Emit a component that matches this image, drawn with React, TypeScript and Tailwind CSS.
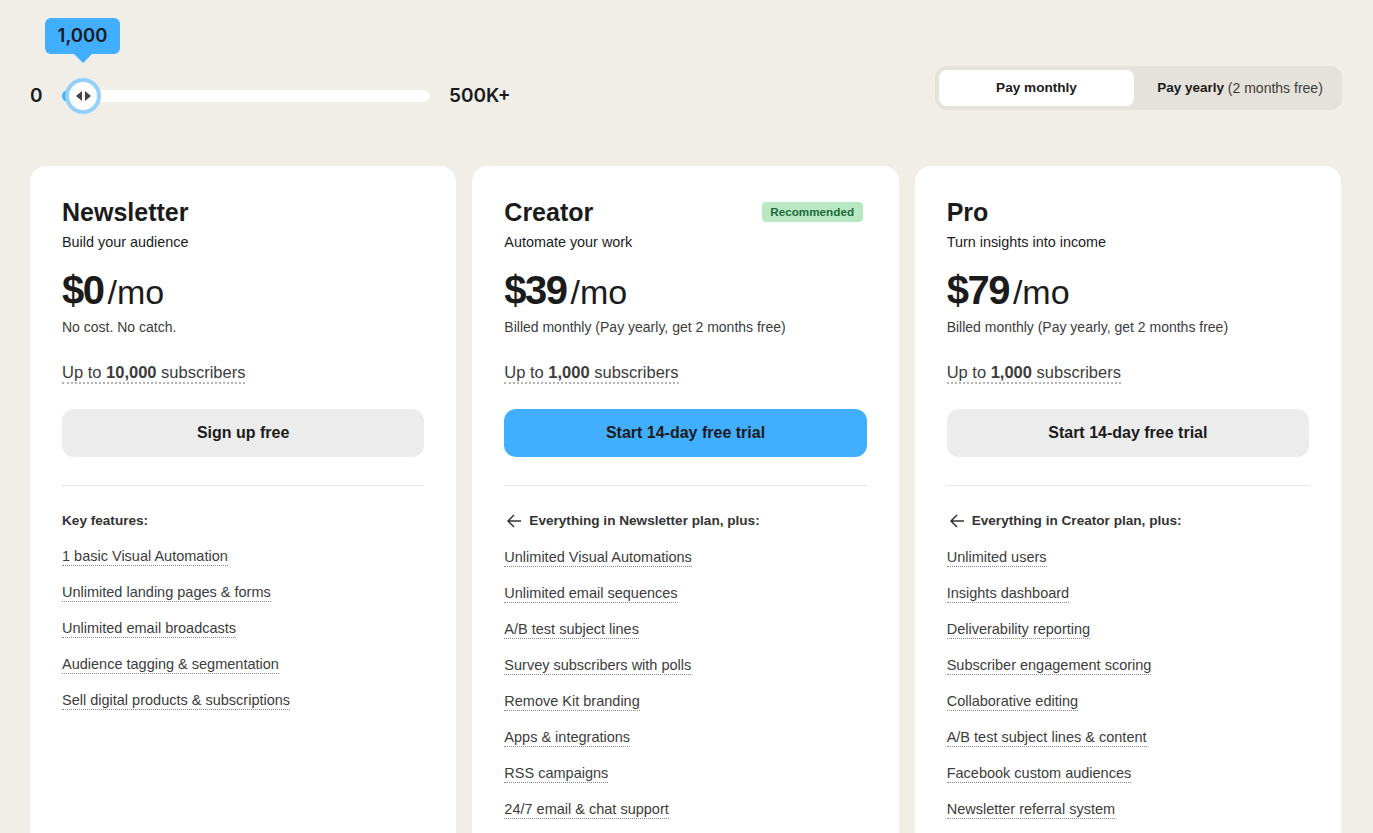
const body = { fontFamily: '"Liberation Sans", Arial, sans-serif' };

type Plan = {
    name: string;
    tagline: string;
    price: string;
    note: string;
    subs: string;
    cta: string;
    primary?: boolean;
    badge?: boolean;
    heading: string;
    back?: boolean;
    features: string[];
};

const plans: Plan[] = [
    {
        name: "Newsletter",
        tagline: "Build your audience",
        price: "$0",
        note: "No cost. No catch.",
        subs: "10,000",
        cta: "Sign up free",
        heading: "Key features:",
        features: [
            "1 basic Visual Automation",
            "Unlimited landing pages & forms",
            "Unlimited email broadcasts",
            "Audience tagging & segmentation",
            "Sell digital products & subscriptions",
        ],
    },
    {
        name: "Creator",
        tagline: "Automate your work",
        price: "$39",
        note: "Billed monthly (Pay yearly, get 2 months free)",
        subs: "1,000",
        cta: "Start 14-day free trial",
        primary: true,
        badge: true,
        back: true,
        heading: "Everything in Newsletter plan, plus:",
        features: [
            "Unlimited Visual Automations",
            "Unlimited email sequences",
            "A/B test subject lines",
            "Survey subscribers with polls",
            "Remove Kit branding",
            "Apps & integrations",
            "RSS campaigns",
            "24/7 email & chat support",
        ],
    },
    {
        name: "Pro",
        tagline: "Turn insights into income",
        price: "$79",
        note: "Billed monthly (Pay yearly, get 2 months free)",
        subs: "1,000",
        cta: "Start 14-day free trial",
        back: true,
        heading: "Everything in Creator plan, plus:",
        features: [
            "Unlimited users",
            "Insights dashboard",
            "Deliverability reporting",
            "Subscriber engagement scoring",
            "Collaborative editing",
            "A/B test subject lines & content",
            "Facebook custom audiences",
            "Newsletter referral system",
        ],
    },
];

function Slider() {
    return (
        <div className="flex items-center pt-[82px] text-[19px] font-semibold text-[#1b1b1b]" style={{ fontFamily: "Inter, sans-serif" }}>
            <span className="w-[32px] leading-[12px]">0</span>
            <div className="relative h-[12px] w-[368px] rounded-full bg-white">
                <div className="h-full w-[24px] rounded-full bg-[#42aeff]" />
                <div className="absolute left-[3px] top-[-12px] flex h-[36px] w-[36px] items-center justify-center gap-[3px] rounded-full border-[4px] border-[#93d0fb] bg-white">
                    <span className="h-0 w-0 border-y-[5px] border-r-[6px] border-y-transparent border-r-[#444]" />
                    <span className="h-0 w-0 border-y-[5px] border-l-[6px] border-y-transparent border-l-[#444]" />
                </div>
                <div className="absolute bottom-[48px] left-[-17px] flex h-[36px] w-[75px] items-center justify-center rounded-[6px] bg-[#42aeff] text-[18.5px] font-semibold">
                    1,000
                    <span className="absolute bottom-[-9px] left-[29px] h-0 w-0 border-x-[9px] border-t-[9px] border-x-transparent border-t-[#42aeff]" />
                </div>
            </div>
            <span className="ml-[19px] leading-[12px]">500K+</span>
        </div>
    );
}

function BillingToggle() {
    return (
        <div className="mt-[66px] mr-[1px] flex h-[44px] w-[407px] rounded-[12px] bg-[#e5e2db] p-[4px] text-[14px] text-[#1b1b1b]">
            <div className="flex w-[195px] items-center justify-center rounded-[8px] bg-white text-[13.6px] font-semibold">Pay monthly</div>
            <div className="flex flex-1 items-center justify-center whitespace-pre pl-[8px]">
                <span className="text-[13.5px] font-semibold">Pay yearly</span>
                <span className="text-[#3c3c3c]"> (2 months free)</span>
            </div>
        </div>
    );
}

function PlanCard({ plan }: { plan: Plan }) {
    return (
        <div className="h-[760px] rounded-[16px] bg-white px-[32px] pt-[32px]">
            <div className="flex h-[28px] items-center justify-between">
                <h2 className="text-[25px] font-bold leading-[28px] text-[#1b1b1b]">{plan.name}</h2>
                {plan.badge && (
                    <span className="mr-[4px] flex h-[20px] w-[101px] items-center justify-center rounded-[4px] bg-[#b9e9c3] text-[11.7px] font-semibold text-[#1e6b3a]">
                        Recommended
                    </span>
                )}
            </div>
            <p className="mt-[4px] text-[14.4px] leading-[24px] text-[#1b1b1b]">{plan.tagline}</p>
            <div className="mt-[14px] flex items-baseline text-[#1b1b1b]">
                <span className="text-[40px] font-bold leading-[44px] tracking-[-1.5px]">{plan.price}</span>
                <span className="ml-[4px] text-[34px] leading-[44px]">/mo</span>
            </div>
            <p className="mt-[1px] text-[14px] leading-[24px] text-[#3c3c3c]">{plan.note}</p>
            <div className="mt-[21px] h-[24px]">
                <span className="border-b-2 border-dotted border-[#b5b5b5] pb-[1px] text-[16.5px] leading-[24px] text-[#3c3c3c]">
                    Up to <b>{plan.subs}</b> subscribers
                </span>
            </div>
            <button
                className={`mt-[25px] block h-[48px] w-full rounded-[12px] text-[16px] font-semibold text-[#1b1b1b] ${plan.primary ? "bg-[#42aeff]" : "bg-[#ececec]"}`}
            >
                {plan.cta}
            </button>
            <div className="mt-[28px] border-t border-[#e4e4e4]" />
            <div className="mt-[23px] flex items-center gap-[7px] text-[13.6px] font-bold text-[#333]">
                {plan.back && (
                    <svg width="16" height="16" viewBox="0 0 16 16" fill="none" stroke="#333" strokeWidth="1.5" className="ml-[2px] shrink-0">
                        <path d="M15 8H2M8 2L2 8l6 6" />
                    </svg>
                )}
                <span className="leading-[24px]">{plan.heading}</span>
            </div>
            <ul className={`flex flex-col gap-[12px] ${plan.back ? "mt-[12px]" : "mt-[11px]"}`}>
                {plan.features.map((f) => (
                    <li key={f} className="h-[24px] text-[14.5px] leading-[24px] text-[#3c3c3c]">
                        <span className="border-b border-dotted border-[#8a8a8a] pb-[1px]">{f}</span>
                    </li>
                ))}
            </ul>
        </div>
    );
}

export default function App() {
    return (
        <div className="h-[833px] overflow-hidden bg-[#f1eee8] px-[30px]" style={body}>
            <div className="flex justify-between">
                <Slider />
                <BillingToggle />
            </div>
            <div className="mt-[56px] grid w-[1311px] grid-cols-3 gap-[16px]">
                {plans.map((p) => (
                    <PlanCard key={p.name} plan={p} />
                ))}
            </div>
        </div>
    );
}
